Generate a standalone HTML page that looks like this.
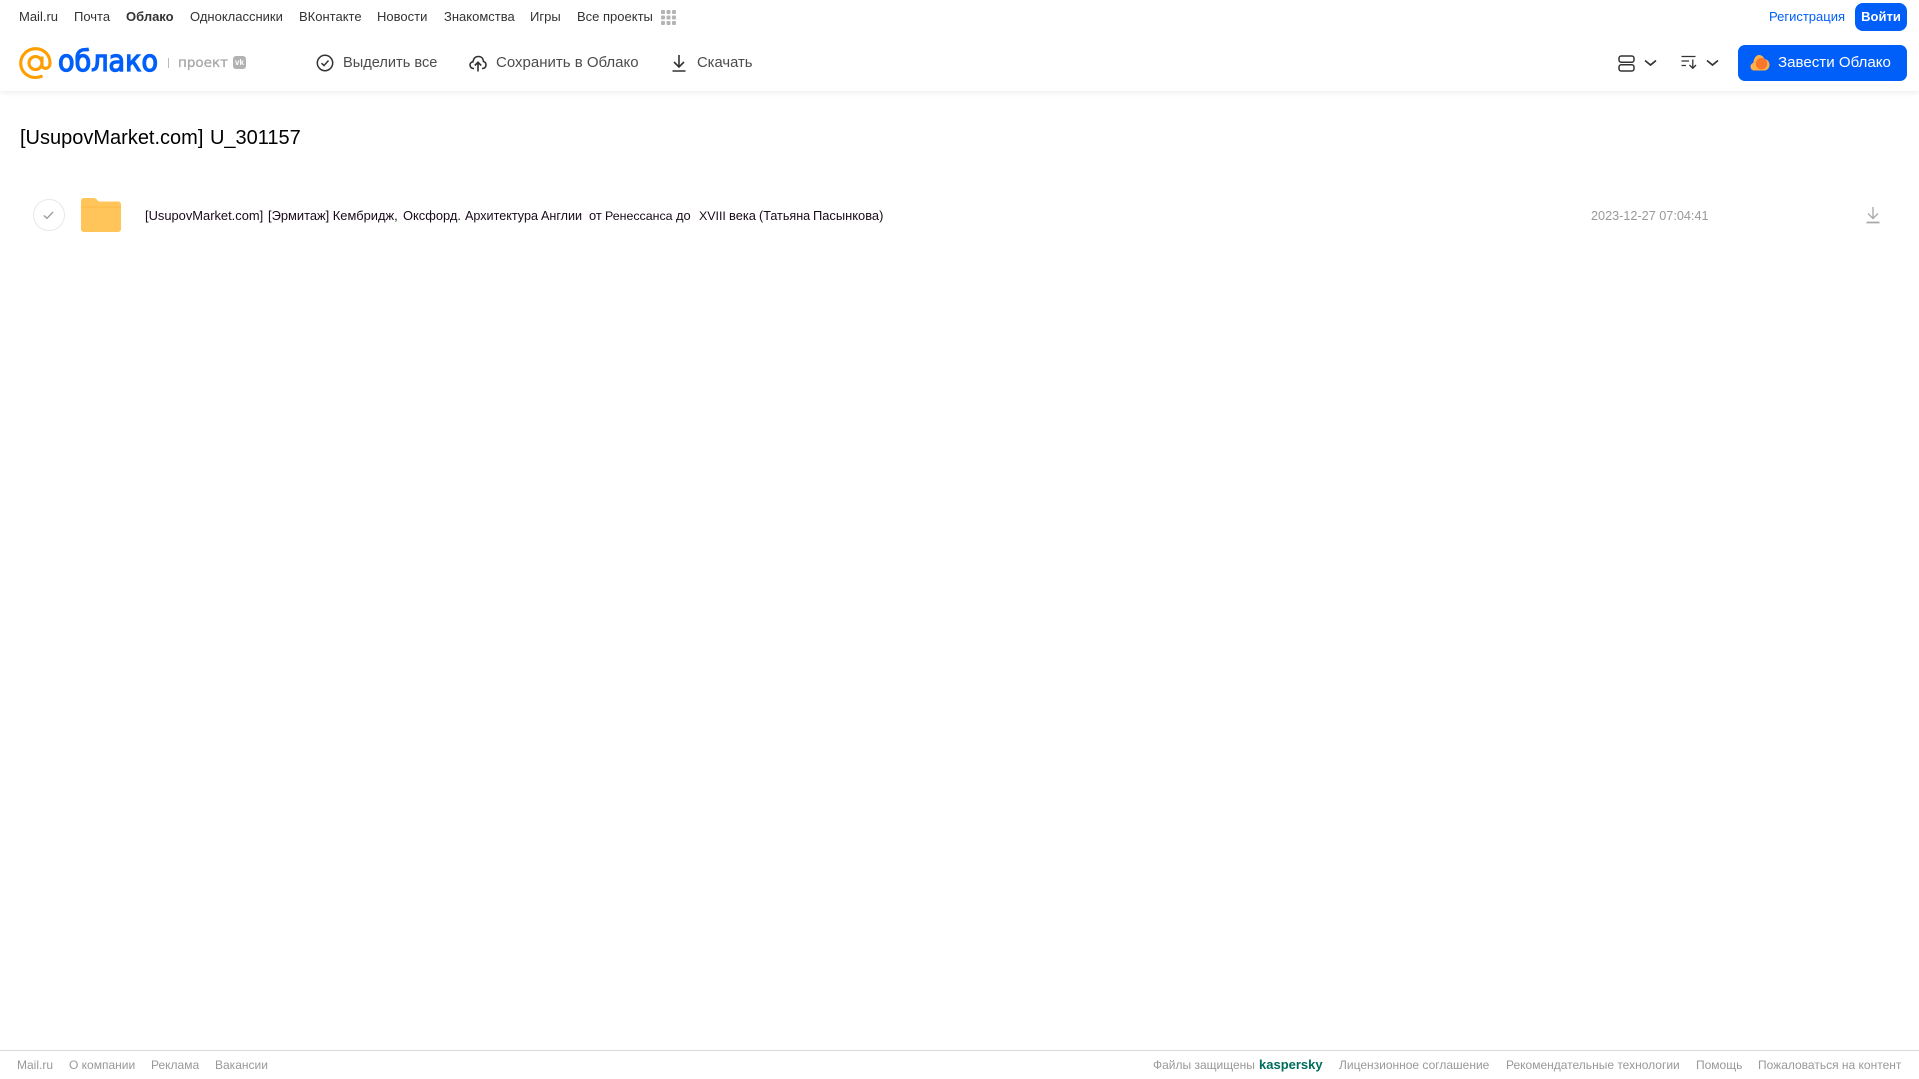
<!DOCTYPE html>
<html lang="ru"><head><meta charset="utf-8"><title>Облако</title>
<style>
html,body{margin:0;padding:0;background:#fff;width:1919px;height:1079px;overflow:hidden;font-family:"Liberation Sans",sans-serif}
.t{position:absolute;white-space:nowrap;line-height:16px}
.n{top:9px;font-size:13px;color:#333}
.a{top:55px;font-size:14.6px;color:#4c4c4c}
.f{top:1057px;font-size:12px;color:#999}
.r{top:208px;font-size:12.9px;color:#1a0a1a}
svg{position:absolute;overflow:visible}
</style></head><body>
<div style="position:absolute;left:0;top:0;width:1919px;height:91px;background:#fff;box-shadow:0 1px 6px rgba(0,0,0,.09)"></div>

<span class="t n" style="left:19px">Mail.ru</span>
<span class="t n" style="left:74px">Почта</span>
<span class="t n" style="left:126px;font-weight:bold">Облако</span>
<span class="t n" style="left:190px">Одноклассники</span>
<span class="t n" style="left:299px">ВКонтакте</span>
<span class="t n" style="left:377px">Новости</span>
<span class="t n" style="left:444px">Знакомства</span>
<span class="t n" style="left:530px">Игры</span>
<span class="t n" style="left:577px">Все проекты</span>
<svg style="left:660px;top:9px" width="16" height="16" fill="#b4b4b4"><rect x="1" y="1" width="4" height="4" rx="1"/><rect x="6.500" y="1" width="4" height="4" rx="1"/><rect x="12" y="1" width="4" height="4" rx="1"/><rect x="1" y="6.500" width="4" height="4" rx="1"/><rect x="6.500" y="6.500" width="4" height="4" rx="1"/><rect x="12" y="6.500" width="4" height="4" rx="1"/><rect x="1" y="12" width="4" height="4" rx="1"/><rect x="6.500" y="12" width="4" height="4" rx="1"/><rect x="12" y="12" width="4" height="4" rx="1"/></svg>

<span class="t n" style="left:1769px;color:#005ff9">Регистрация</span>
<div class="t" style="left:1855px;top:3px;width:52px;height:28px;line-height:28px;border-radius:8px;background:#005ff9;color:#fff;text-align:center;font-size:13px;font-weight:bold">Войти</div>

<!-- logo -->
<svg style="left:19px;top:47px" width="33" height="33" viewBox="0 0 33 33" fill="none" stroke="#ff9e00" stroke-width="3.100"><circle cx="16.500" cy="16" r="6.500"/><path d="M23 9.500V18C23 22.800 31 22.800 31 16C31 7.500 24.500 1.700 16.500 1.700C8.200 1.700 1.700 8.500 1.700 16.200C1.700 24.500 8.500 30.500 16.500 30.500C19 30.500 21.300 30 23.500 28.800"/></svg>
<svg style="left:58px;top:44px" width="104" height="36"><text x="0" y="27" font-family="DejaVu Sans" font-size="29" fill="#005ff9" stroke="#005ff9" stroke-width="1.300" textLength="100" lengthAdjust="spacingAndGlyphs">облако</text></svg>
<div style="position:absolute;left:168px;top:58px;width:1px;height:10px;background:#bbb"></div>
<span class="t" style="left:178px;top:55px;font-size:13.500px;font-family:'DejaVu Sans',sans-serif;color:#a8a8a8;-webkit-text-stroke:.3px #a8a8a8">проект</span>
<div class="t" style="left:233px;top:56px;width:13px;height:13px;border-radius:3px;background:#b2b2b2;color:#fff;font-size:8px;line-height:13px;text-align:center;font-weight:bold">vk</div>

<!-- actions -->
<svg style="left:316px;top:54px" width="18" height="18" viewBox="0 0 18 18" fill="none" stroke="#333" stroke-width="1.500"><circle cx="9" cy="9" r="7.700"/><path d="M5.500 9.200L8 11.600L12.500 6.500"/></svg>
<span class="t a" style="left:343px">Выделить все</span>
<svg style="left:469px;top:54px" width="18" height="18" viewBox="0 0 18 18" fill="none" stroke="#333" stroke-width="1.600"><path d="M5 14.500H4.500C2.500 14.500 1 13 1 11C1 9.200 2.300 8 4 7.800C4.500 4.500 6.500 2.500 9.500 2.500C12.500 2.500 14.300 4.700 14.500 7.500C16 7.900 17 9.200 17 11C17 13 15.500 14.500 13.500 14.500H13"/><path d="M9 17.500V8.500M5.800 11.500L9 8.300L12.200 11.500"/></svg>
<span class="t a" style="left:496px;font-size:15px">Сохранить в Облако</span>
<svg style="left:671px;top:54px" width="16" height="18" viewBox="0 0 16 18" fill="none" stroke="#333" stroke-width="1.600"><path d="M8 1V12.500M3 8L8 13L13 8M1.500 17H14.500"/></svg>
<span class="t a" style="left:697px;font-size:14.800px">Скачать</span>

<!-- right tools -->
<svg style="left:1618px;top:55px" width="17" height="17" viewBox="0 0 17 17" fill="none" stroke="#333" stroke-width="1.500"><rect x="1" y="1" width="15" height="6.200" rx="2.200"/><rect x="1" y="9.800" width="15" height="6.200" rx="2.200"/></svg>
<svg style="left:1644px;top:59px" width="13" height="8" fill="none" stroke="#333" stroke-width="1.700"><path d="M1 1.500L6.500 6L12 1.500"/></svg>
<svg style="left:1681px;top:55px" width="17" height="15" viewBox="0 0 17 15" fill="none" stroke="#333" stroke-width="1.300"><path d="M0.500 1.500H14.500M0.500 6H8M0.500 10.500H5M11.800 4.500V13M8.500 10L11.800 13.300L15 10"/></svg>
<svg style="left:1706px;top:59px" width="13" height="8" fill="none" stroke="#333" stroke-width="1.700"><path d="M1 1.500L6.500 6L12 1.500"/></svg>
<div style="position:absolute;left:1738px;top:45px;width:169px;height:36px;border-radius:7px;background:#005ff9"></div>
<svg style="left:1750px;top:54px" width="20" height="17" viewBox="0 0 20 17"><path d="M4.500 16.500C2 16.500 .500 14.800 .500 12.600C.500 10.800 1.700 9.300 3.300 8.900C3.800 4.500 6 1 9 1C11.500 1 13.500 2.500 14.500 5C17.200 5.300 19.500 7.500 19.500 10.800C19.500 14 17.300 16.500 14.500 16.500Z" fill="#ffb04a"/><circle cx="11.500" cy="9.700" r="5.700" fill="#f9772a"/></svg>
<span class="t" style="left:1778px;top:55px;font-size:15.100px;color:#fff">Завести Облако</span>

<!-- content -->
<span class="t" style="left:20px;top:125px;font-size:20px;line-height:26px;color:#000;word-spacing:1px">[UsupovMarket.com] U_301157</span>

<div style="position:absolute;left:33px;top:199px;width:30px;height:30px;border:1px solid #e8e8e8;border-radius:50%"></div>
<svg style="left:43px;top:211px" width="11" height="9" fill="none" stroke="#9c9c9c" stroke-width="1.400"><path d="M.8 4.500L4 7.300L10 1"/></svg>
<svg style="left:81px;top:198px" width="40" height="34" viewBox="0 0 40 34"><path d="M0 3C0 1.300 1.300 0 3 0H12.500C14 0 15 .7 15.800 1.500C16.500 2.500 17.500 3.500 19 3.500H37C38.700 3.500 40 4.800 40 6.500V31C40 32.700 38.700 34 37 34H3C1.300 34 0 32.700 0 31Z" fill="#ffc55a"/><path d="M0 9H40" stroke="#ffb840" stroke-width="1"/></svg>
<span class="t r" style="left:145px">[UsupovMarket.com]</span>
<span class="t r" style="left:268px">[Эрмитаж] Кембридж,</span>
<span class="t r" style="left:403px">Оксфорд.</span>
<span class="t r" style="left:465px;font-size:12.6px">Архитектура</span>
<span class="t r" style="left:541px;font-size:12.6px">Англии</span>
<span class="t r" style="left:589px">от</span>
<span class="t r" style="left:605px;font-size:12.4px">Ренессанса</span>
<span class="t r" style="left:676px">до</span>
<span class="t r" style="left:699px;font-size:12.4px">XVIII</span>
<span class="t r" style="left:729px">века</span>
<span class="t r" style="left:759px;font-size:12.6px">(Татьяна</span>
<span class="t r" style="left:813px">Пасынкова)</span>
<span class="t" style="left:1591px;top:208px;font-size:12.670px;color:#999">2023-12-27 07:04:41</span>
<svg style="left:1866px;top:206px" width="14" height="18" viewBox="0 0 14 18" fill="none" stroke="#aaa" stroke-width="1.400"><path d="M7 1V12M2 7.500L7 12.500L12 7.500"/><path d="M.5 16.500H13.500" stroke-width="1.800"/></svg>

<!-- footer -->
<div style="position:absolute;left:0;top:1050px;width:1919px;height:1px;background:#d9d9d9"></div>
<span class="t f" style="left:17px">Mail.ru</span>
<span class="t f" style="left:69px">О компании</span>
<span class="t f" style="left:151px">Реклама</span>
<span class="t f" style="left:215px">Вакансии</span>
<span class="t f" style="left:1153px">Файлы защищены</span>
<span class="t f" style="left:1259px;top:1057px;font-weight:bold;font-size:13px;color:#006d5c">kaspersky</span>
<span class="t f" style="left:1339px">Лицензионное соглашение</span>
<span class="t f" style="left:1506px">Рекомендательные технологии</span>
<span class="t f" style="left:1696px">Помощь</span>
<span class="t f" style="left:1758px">Пожаловаться на контент</span>
</body></html>
